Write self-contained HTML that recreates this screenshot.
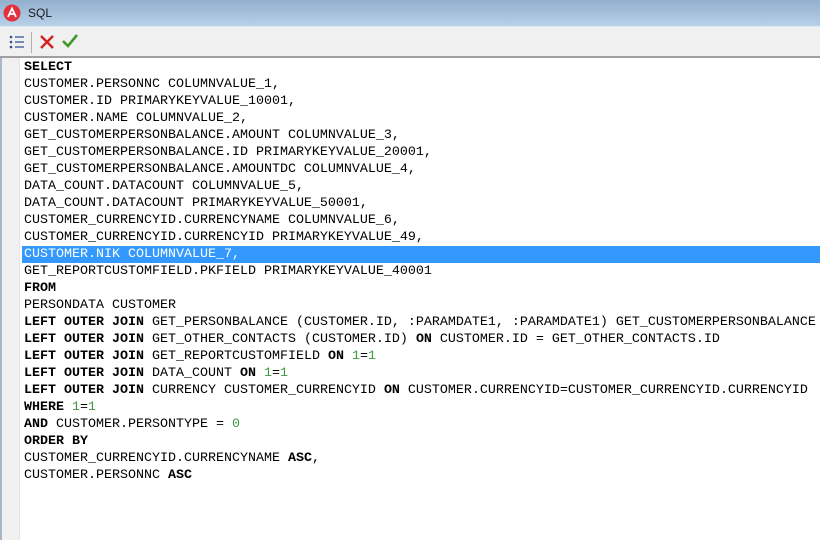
<!DOCTYPE html>
<html><head><meta charset="utf-8"><style>
*{margin:0;padding:0;box-sizing:border-box}
html,body{width:820px;height:540px;overflow:hidden}
body{background:#fff;font-family:"Liberation Sans",sans-serif;position:relative}
#title{position:absolute;left:0;top:0;width:820px;height:27px;background:linear-gradient(#92afcf,#b9d0e8);border-bottom:1px solid #dfe8f3}
#title .t{position:absolute;left:28px;top:6px;font-size:12px;color:#1a1a1a}
#tb{position:absolute;left:0;top:27px;width:820px;height:31px;background:#f0f0f0;border-bottom:2px solid #a0a0a0}
#gut{position:absolute;left:0;top:58px;width:20px;height:482px;background:#f0f0f0;border-left:2px solid #a9b6c8;border-right:1px solid #e6e6e6}
#code{position:absolute;left:0;top:59px;width:820px;font-family:"Liberation Mono",monospace;font-size:13.33px;line-height:17px;color:#000}
#code div{padding-left:24px;height:17px;white-space:pre}
b{font-weight:bold}
.n{color:#3c9a3c}
#code div.hl{background:#3399ff;color:#fff;margin-left:22px;padding-left:2px}
</style></head><body>
<div id="title">
<svg style="position:absolute;left:3px;top:4px" width="18" height="18" viewBox="0 0 18 18"><circle cx="9" cy="9" r="8.5" fill="#e0313c"/><path d="M5 13 L9 4.5 L13 13 M6.8 10 L11.2 10" stroke="#fff" stroke-width="1.8" fill="none"/></svg>
<span class="t">SQL</span></div>
<div id="tb">
<svg style="position:absolute;left:9px;top:7px" width="16" height="16" viewBox="0 0 16 16"><g fill="#2f4f8f"><circle cx="2" cy="3" r="1.3"/><circle cx="2" cy="8" r="1.3"/><circle cx="2" cy="13" r="1.3"/></g><g stroke="#2f4f8f" stroke-width="1.3"><path d="M6 3H15M6 8H15M6 13H15"/></g></svg>
<div style="position:absolute;left:31px;top:5px;width:1px;height:21px;background:#b0b0b0"></div>
<svg style="position:absolute;left:39px;top:7px" width="16" height="16" viewBox="0 0 16 16"><path d="M2 2L14 14M14 2L2 14" stroke="#d42020" stroke-width="2.4"/></svg>
<svg style="position:absolute;left:61px;top:6px" width="18" height="16" viewBox="0 0 18 16"><path d="M2 8L7 13L16 2" stroke="#3d9a2a" stroke-width="2.6" fill="none"/></svg>
</div>
<div id="gut"></div>
<div id="code"><div><b>SELECT</b></div><div>CUSTOMER.PERSONNC COLUMNVALUE_1,</div><div>CUSTOMER.ID PRIMARYKEYVALUE_10001,</div><div>CUSTOMER.NAME COLUMNVALUE_2,</div><div>GET_CUSTOMERPERSONBALANCE.AMOUNT COLUMNVALUE_3,</div><div>GET_CUSTOMERPERSONBALANCE.ID PRIMARYKEYVALUE_20001,</div><div>GET_CUSTOMERPERSONBALANCE.AMOUNTDC COLUMNVALUE_4,</div><div>DATA_COUNT.DATACOUNT COLUMNVALUE_5,</div><div>DATA_COUNT.DATACOUNT PRIMARYKEYVALUE_50001,</div><div>CUSTOMER_CURRENCYID.CURRENCYNAME COLUMNVALUE_6,</div><div>CUSTOMER_CURRENCYID.CURRENCYID PRIMARYKEYVALUE_49,</div><div class="hl">CUSTOMER.NIK COLUMNVALUE_7,</div><div>GET_REPORTCUSTOMFIELD.PKFIELD PRIMARYKEYVALUE_40001</div><div><b>FROM</b></div><div>PERSONDATA CUSTOMER</div><div><b>LEFT OUTER JOIN</b> GET_PERSONBALANCE (CUSTOMER.ID, :PARAMDATE1, :PARAMDATE1) GET_CUSTOMERPERSONBALANCE</div><div><b>LEFT OUTER JOIN</b> GET_OTHER_CONTACTS (CUSTOMER.ID) <b>ON</b> CUSTOMER.ID = GET_OTHER_CONTACTS.ID</div><div><b>LEFT OUTER JOIN</b> GET_REPORTCUSTOMFIELD <b>ON</b> <span class="n">1</span>=<span class="n">1</span></div><div><b>LEFT OUTER JOIN</b> DATA_COUNT <b>ON</b> <span class="n">1</span>=<span class="n">1</span></div><div><b>LEFT OUTER JOIN</b> CURRENCY CUSTOMER_CURRENCYID <b>ON</b> CUSTOMER.CURRENCYID=CUSTOMER_CURRENCYID.CURRENCYID</div><div><b>WHERE</b> <span class="n">1</span>=<span class="n">1</span></div><div><b>AND</b> CUSTOMER.PERSONTYPE = <span class="n">0</span></div><div><b>ORDER BY</b></div><div>CUSTOMER_CURRENCYID.CURRENCYNAME <b>ASC</b>,</div><div>CUSTOMER.PERSONNC <b>ASC</b></div></div>
</body></html>
